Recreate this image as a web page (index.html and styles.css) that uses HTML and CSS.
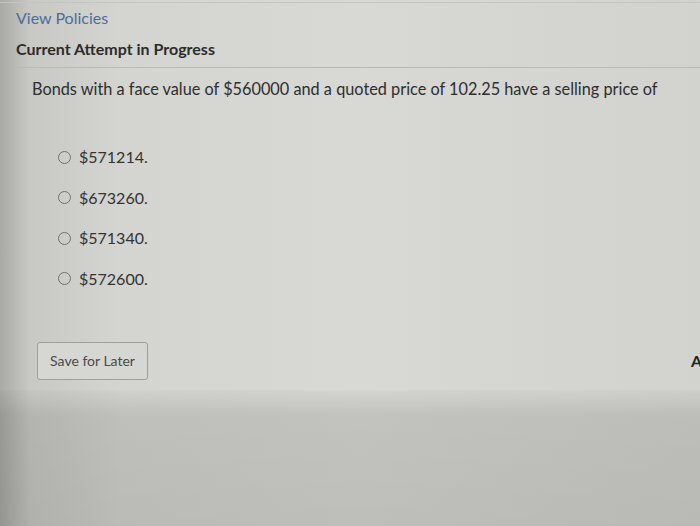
FILE: index.html
```html
<!DOCTYPE html>
<html>
<head>
<meta charset="utf-8">
<link rel="stylesheet" href="styles.css">
</head>
<body>
<div class="page">
  <div class="topline"></div>
  <header class="head">
    <a class="policies">View Policies</a>
    <h2 class="attempt">Current Attempt in Progress</h2>
  </header>
  <main class="question">
    <p class="prompt">Bonds with a face value of $560000 and a quoted price of 102.25 have a selling price of</p>
    <ul class="options">
      <li class="opt"><span class="radio"></span><span>$571214.</span></li>
      <li class="opt"><span class="radio"></span><span>$673260.</span></li>
      <li class="opt"><span class="radio"></span><span>$571340.</span></li>
      <li class="opt"><span class="radio"></span><span>$572600.</span></li>
    </ul>
    <div class="actions">
      <button class="save">Save for Later</button>
      <span class="cut">A</span>
    </div>
  </main>
  <div class="lower"></div>
</div>
</body>
</html>
```
FILE: styles.css
```css
html, body {
  margin: 0;
  padding: 0;
  height: 100%;
}
body {
  font-family: Lato, "Open Sans", sans-serif;
  background: linear-gradient(90deg, #a9a9a6 0px, #c8c8c4 30px, #d4d4d0 120px, #d8d8d4 360px, #d2d2ce 700px);
  overflow: hidden;
}
.page {
  width: 700px;
  height: 526px;
  display: flex;
  flex-direction: column;
}
.topline {
  height: 2px;
  border-bottom: 1px solid #c4c4c0;
}
.head {
  padding: 5px 0 0 16px;
}
.policies {
  display: block;
  font-size: 16px;
  color: #4d6c9c;
  line-height: 20px;
}
.attempt {
  margin: 11px 0 0;
  font-size: 16px;
  font-weight: 700;
  color: #2c2c2c;
  line-height: 20px;
  padding-bottom: 8px;
  border-bottom: 1px solid #b9b9b5;
}
.question {
  padding: 0 0 0 32px;
}
.prompt {
  margin: 11px 0 0;
  font-size: 16.3px;
  line-height: 20px;
  color: #2e2e2e;
}
.options {
  list-style: none;
  margin: 48px 0 0;
  padding: 0 0 0 26px;
  display: flex;
  flex-direction: column;
  gap: 20.5px;
}
.opt {
  display: flex;
  align-items: center;
  gap: 8px;
  font-size: 16px;
  line-height: 20px;
  color: #333;
}
.radio {
  width: 11px;
  height: 11px;
  border: 1.5px solid #707070;
  border-radius: 50%;
  box-sizing: content-box;
}
.actions {
  margin-top: 53px;
  display: flex;
  justify-content: space-between;
  align-items: center;
  padding-left: 5px;
}
.save {
  font-family: Lato, sans-serif;
  font-size: 14px;
  color: #4a4a4a;
  background: #d6d6d2;
  border: 1px solid #9e9e9a;
  border-radius: 3px;
  width: 111px;
  height: 38px;
  padding: 0;
}
.cut {
  font-size: 16px;
  font-weight: 700;
  color: #222;
  margin-right: -2px;
}
.lower {
  flex: 1;
  margin-top: 10px;
  background: linear-gradient(180deg, rgba(0,0,0,0.02), rgba(0,0,0,0.1) 25px, rgba(0,0,0,0.12) 100%);
}
```
